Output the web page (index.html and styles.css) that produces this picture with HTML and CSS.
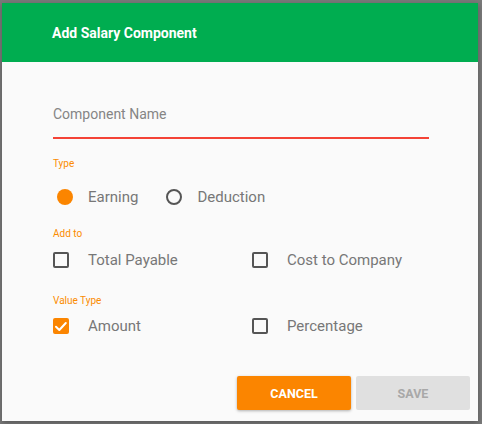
FILE: index.html
```html
<!DOCTYPE html>
<html>
<head>
<meta charset="utf-8">
<link rel="stylesheet" href="styles.css">
</head>
<body>
<div class="dialog">
  <div class="dialog-header">Add Salary Component</div>
  <div class="dialog-body">
    <div class="field">
      <div class="field-input">Component Name</div>
    </div>
    <div class="group-label label-type">Type</div>
    <div class="radio-row">
      <div class="radio-item">
        <span class="radio radio-on"></span>
        <span class="opt-text">Earning</span>
      </div>
      <div class="radio-item radio-item-second">
        <span class="radio"></span>
        <span class="opt-text">Deduction</span>
      </div>
    </div>
    <div class="group-label label-add">Add to</div>
    <div class="check-row">
      <div class="check-item">
        <span class="checkbox"></span>
        <span class="opt-text">Total Payable</span>
      </div>
      <div class="check-item">
        <span class="checkbox"></span>
        <span class="opt-text">Cost to Company</span>
      </div>
    </div>
    <div class="group-label label-value">Value Type</div>
    <div class="check-row check-row-value">
      <div class="check-item">
        <span class="checkbox checkbox-on">
          <svg width="16" height="16" viewBox="0 0 16 16"><path d="M3 8.8 L6.3 12 L12.8 5" fill="none" stroke="#fff" stroke-width="2" stroke-linecap="round" stroke-linejoin="round"/></svg>
        </span>
        <span class="opt-text">Amount</span>
      </div>
      <div class="check-item">
        <span class="checkbox"></span>
        <span class="opt-text">Percentage</span>
      </div>
    </div>
  </div>
  <div class="dialog-actions">
    <button class="btn btn-cancel">CANCEL</button>
    <button class="btn btn-save">SAVE</button>
  </div>
</div>
</body>
</html>
```

FILE: styles.css
```css
html, body {
  margin: 0;
  padding: 0;
}
body {
  background: #7a7a7a;
  width: 482px;
  height: 424px;
  overflow: hidden;
  font-family: Roboto, "Liberation Sans", sans-serif;
  padding: 3px 0 0 2px;
  box-sizing: border-box;
}
.dialog {
  width: 476px;
  height: 418px;
  background: #fafafa;
  display: flex;
  flex-direction: column;
  box-shadow: 0 2px 6px rgba(0,0,0,0.3);
}
.dialog-header {
  height: 59px;
  background: #00ad50;
  color: #fff;
  font-size: 14px;
  font-weight: 700;
  display: flex;
  align-items: center;
  padding-left: 50px;
  box-sizing: border-box;
}
.dialog-body {
  padding: 0 49px 0 51px;
}
.field {
  padding-top: 41px;
  border-bottom: 2px solid #f44336;
}
.field-input {
  font-size: 14px;
  line-height: 22px;
  color: #858585;
  margin-bottom: 12px;
}
.group-label {
  font-size: 10px;
  line-height: 12px;
  color: #fb8c00;
}
.label-type { margin-top: 19px; }
.label-add { margin-top: 19px; }
.label-value { margin-top: 23px; }
.radio-row {
  display: flex;
  align-items: center;
  height: 24px;
  margin-top: 15px;
}
.radio-item {
  display: flex;
  align-items: center;
}
.radio-item-second {
  margin-left: 28px;
}
.radio {
  width: 16px;
  height: 16px;
  box-sizing: border-box;
  border-radius: 50%;
  border: 2px solid #555;
  margin-left: 4px;
  margin-right: 15px;
}
.radio-item-second .radio {
  margin-left: 0;
}
.radio-on {
  border: none;
  background: #fb8500;
}
.opt-text {
  font-size: 15px;
  color: #777;
  line-height: 24px;
}
.check-row {
  display: grid;
  grid-template-columns: 199px 1fr;
  height: 24px;
  margin-top: 8px;
  align-items: center;
}
.check-row-value {
  margin-top: 7px;
}
.check-item {
  display: flex;
  align-items: center;
}
.checkbox {
  width: 16px;
  height: 16px;
  box-sizing: border-box;
  border: 2px solid #555;
  border-radius: 2px;
  margin-right: 19px;
  display: block;
}
.checkbox-on {
  border: none;
  background: #fb8500;
}
.checkbox-on svg {
  display: block;
}
.dialog-actions {
  margin-top: auto;
  margin-bottom: 11px;
  padding-right: 8px;
  display: flex;
  justify-content: flex-end;
  gap: 5px;
}
.btn {
  width: 114px;
  height: 34px;
  border: none;
  border-radius: 2px;
  font-family: Roboto, "Liberation Sans", sans-serif;
  font-size: 12.5px;
  font-weight: 700;
  padding: 0;
}
.btn-cancel {
  background: #fb8500;
  color: #fff;
  box-shadow: 0 1px 3px rgba(0,0,0,0.3);
}
.btn-save {
  background: #e0e0e0;
  color: #a8a8a8;
}
```
